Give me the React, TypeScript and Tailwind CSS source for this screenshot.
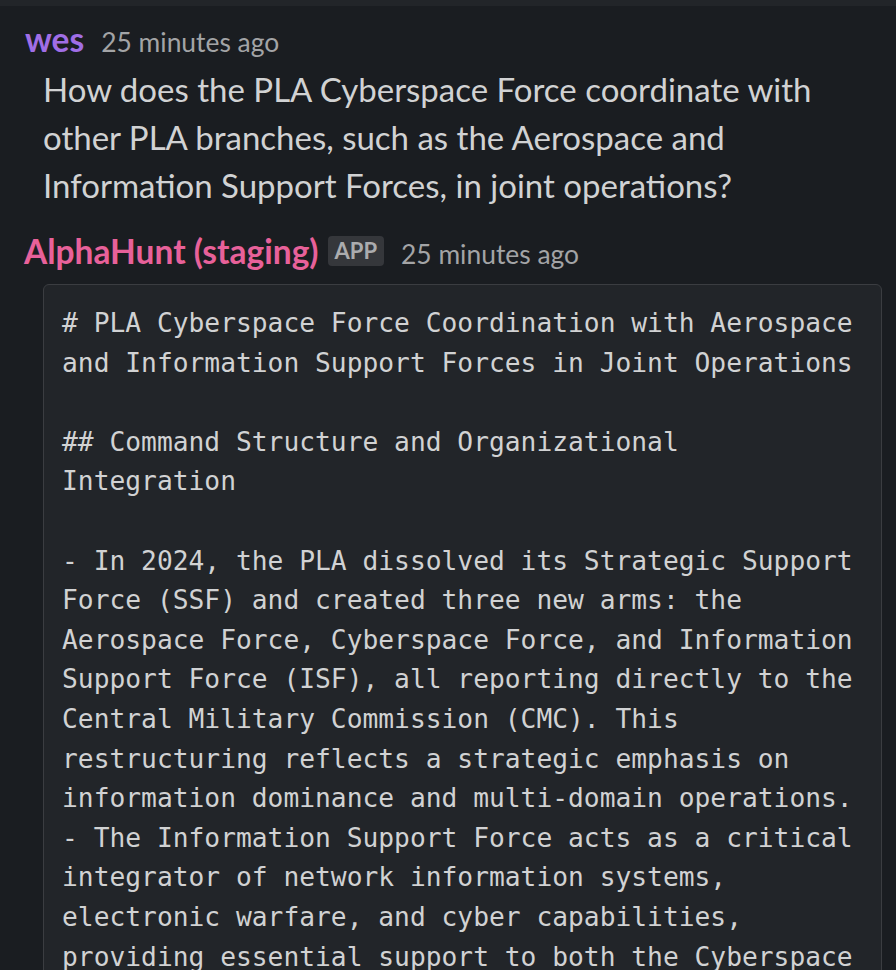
import React from "react";

const lines = [
  "# PLA Cyberspace Force Coordination with Aerospace and Information Support Forces in Joint Operations",
  "",
  "## Command Structure and Organizational Integration",
  "",
  "- In 2024, the PLA dissolved its Strategic Support Force (SSF) and created three new arms: the Aerospace Force, Cyberspace Force, and Information Support Force (ISF), all reporting directly to the Central Military Commission (CMC). This restructuring reflects a strategic emphasis on information dominance and multi-domain operations.",
  "- The Information Support Force acts as a critical integrator of network information systems, electronic warfare, and cyber capabilities, providing essential support to both the Cyberspace Force and the Aerospace Force.",
];

const App = () => {
  return (
    <div className="h-[970px] overflow-hidden bg-[#1a1d21] font-['Lato',sans-serif]">
      {/* top strip */}
      <div className="h-[6px] bg-[#222529]" />

      {/* user message */}
      <div className="pt-[16px]">
        <div className="flex items-baseline gap-[17px] pl-[25px]">
          <span className="text-[33.5px] font-bold text-[#a06ee6] leading-[34px]">wes</span>
          <span className="text-[26.4px] text-[#a3a4a6] leading-[34px]">25 minutes ago</span>
        </div>
        <p className="pl-[43px] pr-[53px] pt-[6px] text-[33px] leading-[48px] text-[#d1d2d3]">
          How does the PLA Cyberspace Force coordinate with other PLA branches, such as the Aerospace and
          Information Support Forces, in joint operations?
        </p>
      </div>

      {/* bot message */}
      <div className="pt-[22px]">
        <div className="flex items-center pl-[24px]">
          <span className="text-[33.5px] font-bold text-[#e8619a] leading-[40px]">AlphaHunt (staging)</span>
          <span className="ml-[9px] rounded-[4px] bg-[#35373b] px-[7px] text-[22px] font-bold leading-[30px] text-[#abacae]">
            APP
          </span>
          <span className="ml-[17px] mt-[6px] text-[26.4px] leading-[34px] text-[#a3a4a6]">25 minutes ago</span>
        </div>
        <div className="ml-[43px] mr-[14px] mt-[13px] rounded-[6px] border border-[#3b3d41] bg-[#222529] px-[18px] pt-[19px] pb-[17px]">
          <pre className="whitespace-pre-wrap font-['DejaVu_Sans_Mono',monospace] text-[26.28px] leading-[39.6px] text-[#d1d2d3]">
            {lines.join("\n")}
          </pre>
        </div>
      </div>
    </div>
  );
};

export default App;
